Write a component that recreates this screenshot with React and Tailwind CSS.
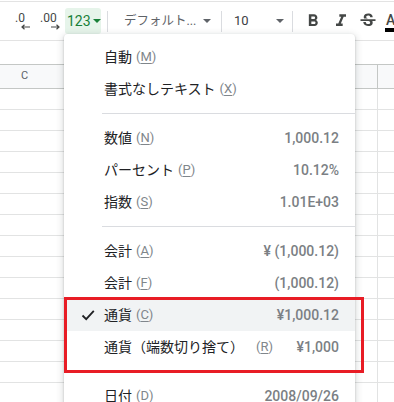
import React from "react";
import { MdFormatBold, MdFormatItalic, MdStrikethroughS } from "react-icons/md";

const font = { fontFamily: 'Roboto, "Noto Sans CJK JP", sans-serif' };

function Caret({ className }) {
  return (
    <svg width="8" height="4" viewBox="0 0 8 4" className={className}>
      <path d="M0 0h8L4 4z" fill="currentColor" />
    </svg>
  );
}

function Item({ label, sc, value, checked, active, gap }) {
  return (
    <div
      className={
        "relative flex h-[32px] items-center pl-[40px] pr-[16px] " +
        (active ? "bg-[#f1f3f4]" : "")
      }
    >
      {checked && (
        <svg
          width="14"
          height="12"
          viewBox="0 0 14 12"
          className="absolute left-[17px] top-[10px]"
        >
          <path d="M1.5 6.5l3.7 3.7L12.8 1.8" stroke="#202124" strokeWidth="1.8" fill="none" />
        </svg>
      )}
      <span className="text-[14px] text-[#202124]">{label}</span>
      <span className={"text-[13px] text-[#80868b] " + (gap ? "ml-[12px]" : "ml-[4px]")}>
        (<span className="underline underline-offset-2">{sc}</span>)
      </span>
      {value && (
        <span className="ml-auto text-[14px] font-medium text-[#7b7f84]">{value}</span>
      )}
    </div>
  );
}

function Divider() {
  return <div className="my-[8px] ml-[38px] h-px bg-[#dadce0]" />;
}

export default function App() {
  const rows = Array.from({ length: 15 });
  return (
    <div className="relative h-[402px] w-[394px] overflow-hidden bg-white" style={font}>
      {/* toolbar */}
      <div className="mt-[1px] flex h-[40px] items-center border-t border-b border-[#e3e3e3] text-[#444746]">
        <div className="relative ml-[14px] h-[26px] w-[16px] shrink-0">
          <span className="absolute left-[1px] top-[3px] text-[12px] leading-[14px]">.0</span>
          <svg width="9" height="6" viewBox="0 0 9 6" className="absolute left-[7px] top-[16px]">
            <path d="M9 3H1.5M3.5 0.8L1 3l2.5 2.2" stroke="#444746" strokeWidth="1.2" fill="none" />
          </svg>
        </div>
        <div className="relative ml-[10px] h-[26px] w-[20px] shrink-0">
          <span className="absolute left-[0px] top-[3px] text-[12px] leading-[14px]">.00</span>
          <svg width="9" height="6" viewBox="0 0 9 6" className="absolute left-[11px] top-[16px]">
            <path d="M0 3h7.5M5.5 0.8L8 3 5.5 5.2" stroke="#444746" strokeWidth="1.2" fill="none" />
          </svg>
        </div>
        <div className="ml-[5px] flex h-[26px] w-[36px] shrink-0 items-center rounded-[3px] bg-[#e6f4ea] pl-[2px] text-[#188038]">
          <span className="text-[14px] leading-none">123</span>
          <Caret className="ml-[2px]" />
        </div>
        <div className="ml-[6px] h-[21px] w-px shrink-0 bg-[#dadce0]" />
        <span className="ml-[16px] w-[75px] shrink-0 whitespace-nowrap text-[12.5px] text-[#5f6368]">
          デフォルト...
        </span>
        <Caret className="ml-[4px] shrink-0 text-[#5f6368]" />
        <div className="ml-[10px] h-[21px] w-px shrink-0 bg-[#dadce0]" />
        <span className="ml-[12px] w-[42px] shrink-0 text-[13px] text-[#3c4043]">10</span>
        <Caret className="shrink-0 text-[#5f6368]" />
        <div className="ml-[8px] h-[21px] w-px shrink-0 bg-[#dadce0]" />
        <MdFormatBold className="ml-[10px] shrink-0 text-[#444746]" size={20} />
        <MdFormatItalic className="ml-[8px] shrink-0 text-[#444746]" size={20} />
        <MdStrikethroughS className="ml-[7px] shrink-0 text-[#444746]" size={20} />
        <div className="relative ml-[5px] h-[26px] w-[12px] shrink-0">
          <span className="absolute left-[3px] top-[2px] text-[14px] font-medium text-[#444746]">A</span>
          <div className="absolute left-[2px] top-[20px] h-[4px] w-[14px] bg-black" />
        </div>
      </div>
      {/* formula bar area */}
      <div className="h-[23px]" />
      {/* header */}
      <div className="flex h-[25px] border-t border-b border-[#c4c7c5] bg-[#f8f9fa]">
        <div className="flex w-[378px] items-center border-r border-[#c4c7c5] pl-[21px] text-[11px] text-[#5f6368]">
          C
        </div>
        <div className="flex-1" />
      </div>
      {rows.map((_, i) => (
        <div key={i} className="flex h-[21px] border-b border-[#e2e3e3]">
          <div className="w-[378px] border-r border-[#e2e3e3]" />
          <div className="flex-1" />
        </div>
      ))}

      {/* menu */}
      <div className="absolute left-[64px] top-[34px] w-[291px] rounded-[4px] bg-white pt-[7px] pb-[20px] shadow-[0_1px_2px_0_rgba(60,64,67,0.3),0_2px_6px_2px_rgba(60,64,67,0.15)]">
        <Item label="自動" sc="M" />
        <Item label="書式なしテキスト" sc="X" />
        <Divider />
        <Item label="数値" sc="N" value="1,000.12" />
        <Item label="パーセント" sc="P" value="10.12%" />
        <Item label="指数" sc="S" value="1.01E+03" />
        <Divider />
        <Item label="会計" sc="A" value="¥ (1,000.12)" />
        <Item label="会計" sc="F" value="(1,000.12)" />
        <Item label="通貨" sc="C" value="¥1,000.12" checked active />
        <Item label="通貨（端数切り捨て）" sc="R" value="¥1,000" gap />
        <Divider />
        <Item label="日付" sc="D" value="2008/09/26" />
      </div>

      {/* red annotation box */}
      <div className="absolute left-[64px] top-[297px] h-[76px] w-[300px] border-[3px] border-[#e81c25]" />
    </div>
  );
}
